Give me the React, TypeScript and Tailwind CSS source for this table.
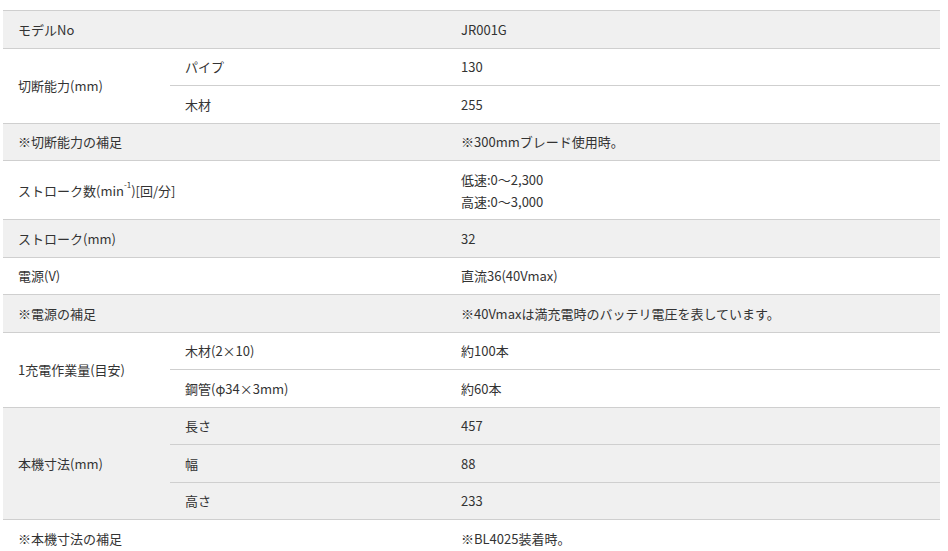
const font = { fontFamily: '"Noto Sans CJK JP", "Noto Sans", sans-serif' }

type Row = {
    label: string
    sub?: string[]
    values: string[][]
    gray: boolean
    tall?: boolean
}

const rows: Row[] = [
    { label: "モデルNo", values: [["JR001G"]], gray: true },
    { label: "切断能力(mm)", sub: ["パイプ", "木材"], values: [["130"], ["255"]], gray: false },
    { label: "※切断能力の補足", values: [["※300mmブレード使用時。"]], gray: true },
    { label: "STROKE_NUM", values: [["低速:0～2,300", "高速:0～3,000"]], gray: false, tall: true },
    { label: "ストローク(mm)", values: [["32"]], gray: true },
    { label: "電源(V)", values: [["直流36(40Vmax)"]], gray: false },
    { label: "※電源の補足", values: [["※40Vmaxは満充電時のバッテリ電圧を表しています。"]], gray: true },
    { label: "1充電作業量(目安)", sub: ["木材(2×10)", "鋼管(φ34×3mm)"], values: [["約100本"], ["約60本"]], gray: false },
    { label: "本機寸法(mm)", sub: ["長さ", "幅", "高さ"], values: [["457"], ["88"], ["233"]], gray: true },
    { label: "※本機寸法の補足", values: [["※BL4025装着時。"]], gray: false },
]

function Label({ text }: { text: string }) {
    if (text === "STROKE_NUM") {
        return (
            <>
                ストローク数(min<sup className="text-[8px] align-[4px]">-1</sup>)[回/分]
            </>
        )
    }
    return <>{text}</>
}

export default function App() {
    return (
        <div className="bg-white w-[948px] h-[551px] overflow-hidden pt-[10px] pl-[3px]" style={font}>
            <table className="w-[937px] border-collapse text-[13px] text-[#333] leading-[20px] table-fixed">
                <colgroup>
                    <col className="w-[167px]" />
                    <col className="w-[276px]" />
                    <col />
                </colgroup>
                <tbody>
                    {rows.map((row, i) => {
                        const bg = row.gray ? "bg-[#f0f0f0]" : "bg-white"
                        const last = i === rows.length - 1
                        const border = last ? "" : "border-b border-[#cfcfcf]"
                        if (!row.sub) {
                            return (
                                <tr key={i} className={`${bg} ${i === 0 ? "border-t border-[#cfcfcf]" : ""}`}>
                                    <td colSpan={2} className={`pl-[15px] pt-px align-middle ${border} ${row.tall ? "h-[59px]" : "h-[37.5px]"}`}>
                                        <Label text={row.label} />
                                    </td>
                                    <td className={`pl-[15px] pt-px align-middle ${border}`}>
                                        {row.values[0].map((v) => (
                                            <div key={v} className={row.tall ? "leading-[22px]" : ""}>{v}</div>
                                        ))}
                                    </td>
                                </tr>
                            )
                        }
                        return row.sub.map((s, j) => (
                            <tr key={`${i}-${j}`} className={bg}>
                                {j === 0 && (
                                    <td rowSpan={row.sub!.length} className="pl-[15px] pt-px align-middle border-b border-[#cfcfcf]">
                                        {row.label}
                                    </td>
                                )}
                                <td className="pl-[15px] pt-px h-[37.5px] align-middle border-b border-[#cfcfcf]">{s}</td>
                                <td className="pl-[15px] pt-px align-middle border-b border-[#cfcfcf]">{row.values[j][0]}</td>
                            </tr>
                        ))
                    })}
                </tbody>
            </table>
        </div>
    )
}
